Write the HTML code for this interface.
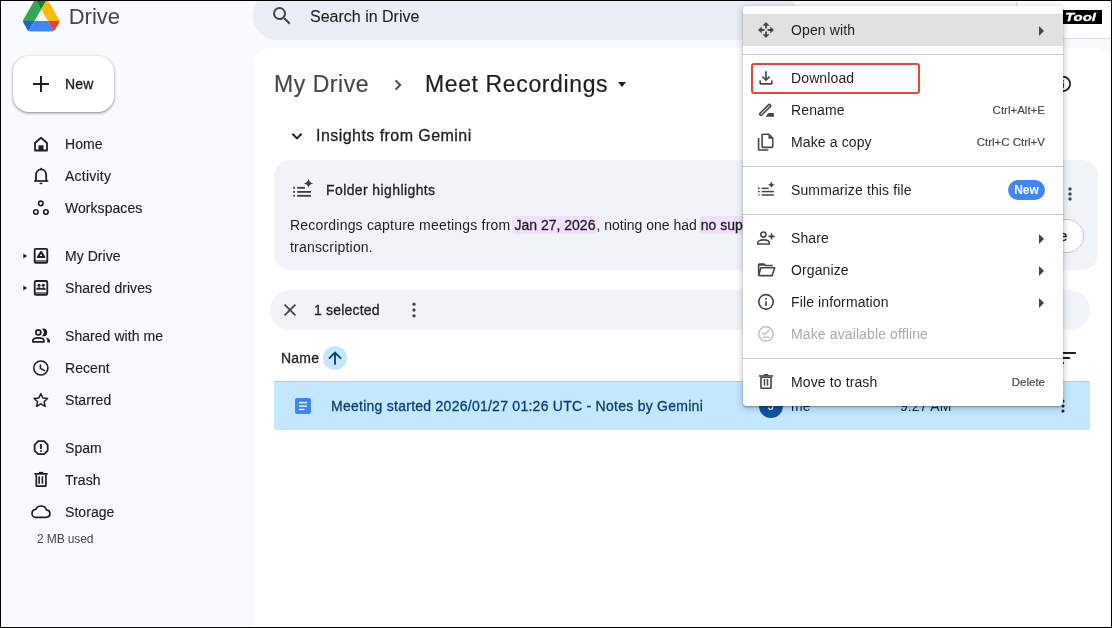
<!DOCTYPE html>
<html><head><meta charset="utf-8">
<style>
*{box-sizing:border-box;margin:0;padding:0}
html,body{width:1112px;height:628px;overflow:hidden;background:#f8fafd;will-change:transform;font-family:"Liberation Sans",sans-serif;color:#1f1f1f}
.a{position:absolute;white-space:nowrap}
#frame{position:absolute;left:0;top:0;width:1112px;height:628px;border:1px solid #000;z-index:100;pointer-events:none}
.nav{position:absolute;white-space:nowrap;left:65px;font-size:14px;color:#1f1f1f;line-height:16px;-webkit-text-stroke:0.15px #1f1f1f;letter-spacing:0.05px}
.ni{position:absolute;left:32px;width:18px;height:18px}
.mi{position:absolute;white-space:nowrap;left:791px;font-size:14px;color:#1f1f1f;line-height:16px;letter-spacing:0.12px}
.mic{position:absolute;left:756px;width:20px;height:20px}
.sc{position:absolute;white-space:nowrap;font-size:11.5px;color:#444746;line-height:14px;text-align:right;right:67px;-webkit-text-stroke:0.15px #444746}
.arr{position:absolute;left:1039px;width:0;height:0;border-top:5px solid transparent;border-bottom:5px solid transparent;border-left:5px solid #444746}
.hl{background:#f1e0fc;border-radius:4px;padding:1px 2px 1px 2px;margin-left:-2px;margin-right:-1px;letter-spacing:0;-webkit-text-stroke:0.3px #1f1f1f}
.div{position:absolute;left:743px;width:320px;height:1px;background:#c7c7c7}
</style></head><body>
<div id="frame"></div>

<!-- logo -->
<svg class="a" style="left:22.7px;top:-0.8px" width="36.4" height="32.5" viewBox="0 0 87.3 78">
<path d="m6.6 66.85 3.85 6.65c.8 1.4 1.95 2.5 3.3 3.3l13.75-23.8h-27.5c0 1.55.4 3.1 1.2 4.5z" fill="#1967d2"/>
<path d="m43.65 25-13.75-23.8c-1.35.8-2.5 1.9-3.3 3.3l-25.4 44a9.06 9.06 0 0 0 -1.2 4.5h27.5z" fill="#34a853"/>
<path d="m73.55 76.8c1.35-.8 2.5-1.9 3.3-3.3l1.6-2.75 7.65-13.25c.8-1.4 1.2-2.95 1.2-4.5h-27.502l5.852 11.5z" fill="#ea4335"/>
<path d="m43.65 25 13.75-23.8c-1.35-.8-2.9-1.2-4.5-1.2h-18.5c-1.6 0-3.15.45-4.5 1.2z" fill="#188038"/>
<path d="m59.8 53h-32.3l-13.75 23.8c1.35.8 2.9 1.2 4.5 1.2h50.8c1.6 0 3.15-.45 4.5-1.2z" fill="#4285f4"/>
<path d="m73.4 26.5-12.7-22c-.8-1.4-1.95-2.5-3.3-3.3l-13.75 23.8 16.15 28h27.45c0-1.55-.4-3.1-1.2-4.5z" fill="#fbbc04"/>
</svg>
<div class="a" style="left:68.7px;top:4px;font-size:22px;color:#444746;line-height:26px">Drive</div>

<!-- search -->
<div class="a" style="left:253px;top:-8px;width:545px;height:48px;border-radius:24px;background:#e9eef6"></div>
<svg class="a" style="left:270px;top:4px" width="24" height="24" viewBox="0 0 24 24"><path fill="#444746" d="M15.5 14h-.79l-.28-.27A6.47 6.47 0 0 0 16 9.5 6.5 6.5 0 1 0 9.5 16c1.61 0 3.09-.59 4.23-1.57l.27.28v.79l5 4.99L20.49 19l-4.99-5zm-6 0C7.01 14 5 11.99 5 9.5S7.01 5 9.5 5 14 7.01 14 9.5 11.99 14 9.5 14z"/></svg>
<div class="a" style="left:310px;top:8px;font-size:16px;color:#1f1f1f;line-height:18px;-webkit-text-stroke:0.1px #1f1f1f">Search in Drive</div>

<!-- top right white area -->
<div class="a" style="left:1016px;top:0;width:96px;height:39px;background:#fff;border-left:1px solid #dadce0;border-bottom:1px solid #dadce0"></div>
<div class="a" style="left:1063px;top:10px;width:39px;height:14px;background:#000"></div><div class="a" style="left:1065px;top:10px;color:#fff;font-weight:bold;font-style:italic;font-size:11.5px;line-height:14px;transform:scaleX(1.3);transform-origin:0 0;-webkit-text-stroke:0.3px #fff">Tool</div>

<!-- new button -->
<div class="a" style="left:13px;top:56px;width:101px;height:56px;border-radius:16px;background:#fff;box-shadow:0 1px 3px 1px rgba(0,0,0,.15),0 1px 2px rgba(0,0,0,.3)"></div>
<svg class="a" style="left:29px;top:72px" width="24" height="24" viewBox="0 0 24 24"><path d="M20 13h-7v7h-2v-7H4v-2h7V4h2v7h7v2z" fill="#1f1f1f"/></svg>
<div class="a" style="left:65px;top:76px;font-size:14px;line-height:16px;color:#1f1f1f;-webkit-text-stroke:0.35px #1f1f1f;letter-spacing:0.2px">New</div>


<!-- sidebar nav -->
<svg class="a" style="left:0;top:0" width="60" height="628" viewBox="0 0 60 628">
<g fill="none" stroke="#1f1f1f" stroke-width="1.8" stroke-linejoin="round">
<!-- home -->
<path d="M35 150.5V143L41 137.8 47 143V150.5Z"/>
<!-- bell -->
<path d="M36 180.9V175.2C36 171.8 38.2 169.3 41.1 169.3S46.2 171.8 46.2 175.2V180.9"/>
<path d="M34.1 181H48.2" stroke-width="1.7"/>
<!-- workspaces -->
<g stroke-width="1.6"><circle cx="40.8" cy="203.4" r="2.25"/><circle cx="35.9" cy="212" r="2.25"/><circle cx="45.9" cy="212" r="2.25"/></g>
<!-- my drive box -->
<rect x="34.7" y="248.8" width="12.6" height="14.1" rx="1.3"/>
<path d="M41.1 252 37.9 257H44.3Z" stroke-width="2.1" stroke-linejoin="round"/>
<!-- shared drives box -->
<rect x="34.7" y="281" width="12.6" height="13.9" rx="1.3"/>
<!-- shared with me -->
<circle cx="38.35" cy="332.4" r="2.45" stroke-width="1.75"/>
<path d="M32.9 341.8V340.6C32.9 338.9 35.5 337.9 38.4 337.9S43.9 338.9 43.9 340.6V341.8Z" stroke-width="1.75"/>
<!-- clock -->
<circle cx="40.85" cy="368" r="7.05" stroke-width="1.6"/>
<path d="M40.4 364.6V368.3L45 370.9" stroke-width="1.5" stroke-linejoin="miter"/>
<!-- star -->
<path d="M40.85 393.6 42.9 398 47.6 398.5 44.1 401.7 45.1 406.3 40.85 403.9 36.6 406.3 37.6 401.7 34.1 398.5 38.8 398Z" stroke-width="1.5"/>
<!-- spam octagon -->
<path d="M38.2 441.2H44.1L47.7 444.8V450.6L44.1 454.2H38.2L34.6 450.6V444.8Z" stroke-width="1.75"/>
<!-- trash -->
<path d="M36.3 474.5V485.4Q36.3 486.2 37.1 486.2H45.1Q45.9 486.2 45.9 485.4V474.5" stroke-width="1.7"/>
<!-- cloud -->
<path d="M35.3 517.4H45.8C48.2 517.4 49.9 515.8 49.9 513.6 49.9 511.6 48.4 510 46.4 509.8 45.6 507.5 43.5 506 41 506 38.6 506 36.6 507.4 35.8 509.4 33.6 509.7 32 511.4 32 513.4 32 515.6 33.6 517.4 35.3 517.4Z" stroke-width="1.7"/>
</g>
<g fill="#1f1f1f">
<rect x="38.5" y="145.3" width="5" height="5.8"/>
<rect x="40.3" y="167.9" width="1.6" height="2"/>
<path d="M39.4 182.8H42.6Q42.4 184.3 41 184.3T39.4 182.8Z"/>
<path d="M23.3 253.4 27.2 255.9 23.3 258.4Z"/>
<rect x="35" y="260.4" width="12" height="1.2"/>
<path d="M23.3 285.4 27.2 287.9 23.3 290.4Z"/>
<rect x="35" y="292.4" width="12" height="1.2"/>
<circle cx="39" cy="285.3" r="1.5"/><circle cx="43.3" cy="285.3" r="1.5"/>
<path d="M36.1 289.8Q36.3 287.2 39 287.2T41.9 289.8Z M41.1 289.8Q41.3 287.2 43.3 287.2T46.3 289.8Z"/>
<path d="M43.2 329.1A3.3 3.3 0 0 1 43.2 335.7 5.2 5.2 0 0 0 43.2 329.1Z" stroke="#1f1f1f" stroke-width="1.3"/>
<path d="M45.3 337.3C47.6 337.8 49.9 338.8 49.9 340.6V342.6H47.3V340.6C47.3 339.4 46.6 338.3 45.3 337.3Z"/>
<rect x="40.1" y="444" width="1.8" height="5"/>
<rect x="40.1" y="450.3" width="1.8" height="1.6"/>
<rect x="34.2" y="473" width="13.5" height="1.7"/>
<rect x="38.9" y="471.9" width="4.5" height="1.3"/>
<rect x="38.3" y="476.3" width="1.6" height="7.5"/>
<rect x="41.6" y="476.3" width="1.6" height="7.5"/>
</g>
</svg>
<div class="nav" style="top:136px">Home</div>
<div class="nav" style="top:168px;letter-spacing:0.22px">Activity</div>
<div class="nav" style="top:200px">Workspaces</div>

<div class="nav" style="top:248px">My Drive</div>
<div class="nav" style="top:280px">Shared drives</div>

<div class="nav" style="top:328px">Shared with me</div>
<div class="nav" style="top:360px">Recent</div>
<div class="nav" style="top:392px">Starred</div>

<div class="nav" style="top:440px">Spam</div>
<div class="nav" style="top:472px">Trash</div>
<div class="nav" style="top:504px">Storage</div>
<div class="a" style="left:37px;top:532px;font-size:12px;color:#444746;line-height:14px;letter-spacing:-0.12px">2 MB used</div>

<!-- main panel -->
<div class="a" style="left:254px;top:48px;width:857px;height:620px;border-radius:16px;background:#fff"></div>


<!-- breadcrumb -->
<div class="a" style="left:274px;top:71px;font-size:23px;color:#444746;line-height:26px;letter-spacing:0.55px;-webkit-text-stroke:0.15px #444746">My Drive</div>
<svg class="a" style="left:386px;top:73px" width="24" height="24" viewBox="0 0 24 24"><path fill="none" stroke="#444746" stroke-width="1.9" d="M9.5 7.3 14.2 12l-4.7 4.7"/></svg>
<div class="a" style="left:425px;top:71px;font-size:23px;color:#1f1f1f;line-height:26px;letter-spacing:0.62px;-webkit-text-stroke:0.2px #1f1f1f">Meet Recordings</div>
<div class="a" style="left:618px;top:82px;width:0;height:0;border-left:4.5px solid transparent;border-right:4.5px solid transparent;border-top:5px solid #1f1f1f"></div>
<svg class="a" style="left:1053px;top:74px" width="20" height="20" viewBox="0 0 24 24"><g fill="none" stroke="#1f1f1f" stroke-width="2.1"><circle cx="12" cy="11.8" r="8.6"/></g><rect x="11" y="10.5" width="2" height="6.5" fill="#1f1f1f"/><rect x="11" y="7" width="2" height="2" fill="#1f1f1f"/></svg>

<!-- insights -->
<svg class="a" style="left:287px;top:126px" width="20" height="20" viewBox="0 0 24 24"><path fill="none" stroke="#1f1f1f" stroke-width="2.3" d="M6.5 9.3 12 14.8l5.5-5.5"/></svg>
<div class="a" style="left:316px;top:127px;font-size:16px;color:#1f1f1f;line-height:18px;-webkit-text-stroke:0.3px #1f1f1f;letter-spacing:0.45px">Insights from Gemini</div>

<div class="a" style="left:274px;top:160px;width:824px;height:110px;border-radius:16px;background:#f0f4f9"></div>
<svg class="a" style="left:286px;top:174px" width="32" height="28" viewBox="0 0 32 28"><g fill="#3c3f41"><rect x="7.1" y="12.9" width="1.8" height="1.8"/><rect x="7.1" y="17" width="1.8" height="1.8"/><rect x="7.1" y="20.9" width="1.8" height="1.8"/><rect x="11.1" y="12.9" width="7.8" height="1.8"/><rect x="11.1" y="17" width="13.9" height="1.8"/><rect x="11.1" y="20.9" width="13.9" height="1.8"/><path d="M22.5 4.6Q23 8.8 27.2 9.4Q23 10 22.5 14.1Q22 10 17.8 9.4Q22 8.8 22.5 4.6Z"/></g></svg>
<div class="a" style="left:326px;top:182px;font-size:14px;color:#1f1f1f;line-height:16px;-webkit-text-stroke:0.3px #1f1f1f;letter-spacing:0.4px">Folder highlights</div>
<div class="a" style="left:290px;top:214px;font-size:14px;color:#1f1f1f;line-height:22px;white-space:normal;width:800px;letter-spacing:0.2px">Recordings capture meetings from <span class="hl">Jan 27, 2026</span><span style="letter-spacing:0">, noting one had </span><span class="hl">no supported</span><br>transcription.</div>
<svg class="a" style="left:1060px;top:183.8px" width="20" height="20" viewBox="0 0 24 24"><g fill="#444746"><circle cx="12" cy="6" r="2"/><circle cx="12" cy="12" r="2"/><circle cx="12" cy="18" r="2"/></g></svg>
<div class="a" style="left:1000px;top:219px;width:84px;height:34px;border-radius:17px;border:1px solid #c4c7c5;background:#fff"></div><div class="a" style="left:1030px;top:228px;font-size:14px;line-height:16px;color:#1f1f1f;-webkit-text-stroke:0.3px #1f1f1f">Share</div>

<!-- selection bar -->
<div class="a" style="left:270px;top:290px;width:820px;height:40px;border-radius:20px;background:#f0f4f9"></div>
<svg class="a" style="left:278px;top:298px" width="24" height="24" viewBox="0 0 24 24"><path fill="none" stroke="#444746" stroke-width="1.75" d="M6.6 6.6l10.8 10.8M17.4 6.6l-10.8 10.8"/></svg>
<div class="a" style="left:314px;top:302px;font-size:14px;color:#1f1f1f;line-height:16px;-webkit-text-stroke:0.3px #1f1f1f;letter-spacing:0.2px">1 selected</div>
<svg class="a" style="left:404px;top:300px" width="20" height="20" viewBox="0 0 24 24"><g fill="#444746"><circle cx="12" cy="5" r="2"/><circle cx="12" cy="12" r="2"/><circle cx="12" cy="19" r="2"/></g></svg>

<!-- header -->
<div class="a" style="left:281px;top:350px;font-size:14px;color:#1f1f1f;line-height:16px;-webkit-text-stroke:0.3px #1f1f1f;letter-spacing:0.2px">Name</div>
<div class="a" style="left:323px;top:346px;width:24px;height:24px;border-radius:12px;background:#c2e7ff"></div>
<svg class="a" style="left:325px;top:348px" width="20" height="20" viewBox="0 0 24 24"><path fill="#07406e" d="M10.9 20V8.1l-5.4 5.4L4 12l8-8 8 8-1.5 1.5-5.4-5.4V20z"/></svg>
<svg class="a" style="left:1050px;top:346px" width="30" height="22" viewBox="0 0 30 22"><g fill="#1f1f1f"><rect x="8" y="6" width="18" height="2" rx="0.5"/><rect x="8" y="11" width="12" height="2" rx="0.5"/><rect x="8" y="16" width="6" height="2" rx="0.5"/></g></svg>

<!-- row -->
<div class="a" style="left:274px;top:381px;width:816px;height:49px;background:#c2e7ff;border-top:1px solid #c7c7c7"></div>
<svg class="a" style="left:295px;top:398px" width="16" height="16" viewBox="0 0 16 16"><rect x="0" y="0" width="16" height="16" rx="2" fill="#4285f4"/><g fill="#fff"><rect x="4" y="4" width="8" height="1.3"/><rect x="4" y="7.4" width="8" height="1.3"/><rect x="4" y="10.8" width="5.5" height="1.3"/></g></svg>
<div class="a" style="left:331px;top:398px;font-size:14px;color:#0b3f70;line-height:16px;-webkit-text-stroke:0.3px #0b3f70;letter-spacing:0.26px">Meeting started 2026/01/27 01:26 UTC - Notes by Gemini</div>
<div class="a" style="left:759px;top:394px;width:24px;height:24px;border-radius:12px;background:#0a56a3;color:#fff;font-size:13px;line-height:24px;text-align:center">J</div>
<div class="a" style="left:791px;top:398px;font-size:14px;color:#0b2a4a;line-height:16px">me</div>
<div class="a" style="left:900px;top:398px;font-size:14px;color:#0b2a4a;line-height:16px">9:27 AM</div>
<svg class="a" style="left:1053px;top:395.8px" width="20" height="20" viewBox="0 0 24 24"><g fill="#1f1f1f"><circle cx="12" cy="6.1" r="1.85"/><circle cx="12" cy="12" r="1.85"/><circle cx="12" cy="17.9" r="1.85"/></g></svg>


<!-- context menu -->
<div class="a" style="left:743px;top:6px;width:320px;height:400px;background:#fff;border-radius:4px;box-shadow:0 2px 6px 2px rgba(0,0,0,.15),0 1px 2px rgba(0,0,0,.3);z-index:10"></div>
<div id="menu" style="position:absolute;left:0;top:0;width:1112px;height:628px;z-index:11">
<div class="a" style="left:743px;top:14px;width:320px;height:32px;background:#e1e1e1"></div>
<svg class="mic" style="top:20px" viewBox="0 0 24 24"><path fill="#444746" d="M12 2.4 16.3 6.9H13.1V10.2H10.9V6.9H7.7Z M12 21.6 7.7 17.1H10.9V13.8H13.1V17.1H16.3Z M2.4 12 6.9 7.7V10.9H10.2V13.1H6.9V16.3Z M21.6 12 17.1 16.3V13.1H13.8V10.9H17.1V7.7Z"/></svg>
<div class="mi" style="top:22px">Open with</div>
<div class="arr" style="top:26px"></div>
<div class="div" style="top:54px"></div>

<svg class="mic" style="top:68px" viewBox="0 0 24 24"><path fill="#444746" d="M12 16 7 11l1.4-1.45 2.6 2.6V4h2v8.15l2.6-2.6L17 11zm-6 4c-.55 0-1.02-.2-1.41-.59A1.93 1.93 0 0 1 4 18v-3h2v3h12v-3h2v3c0 .55-.2 1.02-.59 1.41-.39.4-.86.59-1.41.59z"/></svg>
<div class="mi" style="top:70px">Download</div>
<div class="a" style="left:751px;top:63px;width:169px;height:31px;border:2.8px solid #e8473d;border-radius:3px"></div>

<svg class="mic" style="top:100px" viewBox="0 0 24 24"><g transform="translate(11 11.9) rotate(45)"><rect x="-1.5" y="-8.6" width="3" height="17.2" rx="1.5" fill="none" stroke="#444746" stroke-width="1.9"/></g><path fill="#444746" d="M11.4 20 15 15.6H21.4V20Z"/></svg>
<div class="mi" style="top:102px">Rename</div>
<div class="sc" style="top:103px">Ctrl+Alt+E</div>

<svg class="mic" style="top:132px" viewBox="0 0 24 24"><path fill="none" stroke="#444746" stroke-width="1.9" stroke-linejoin="round" d="M8.3 2.7H15.4L20.1 7.4V17.4Q20.1 18.4 19.1 18.4H8.3Q7.3 18.4 7.3 17.4V3.7Q7.3 2.7 8.3 2.7Z M3.1 7.3V20.6Q3.1 21.6 4.1 21.6H14.8"/><path fill="#444746" d="M15 3V8H20Z"/></svg>
<div class="mi" style="top:134px">Make a copy</div>
<div class="sc" style="top:135px">Ctrl+C Ctrl+V</div>
<div class="div" style="top:166px"></div>

<svg class="mic" style="top:180px" viewBox="0 0 24 24"><g fill="#444746"><rect x="2.4" y="9.1" width="2" height="1.8"/><rect x="2.4" y="13" width="2" height="1.8"/><rect x="2.9" y="16.9" width="1.2" height="2.2"/><rect x="6.7" y="9.1" width="8.5" height="1.8"/><rect x="6.7" y="13" width="14.7" height="1.8"/><rect x="6.7" y="17.1" width="14.7" height="1.8"/><path d="M18.4 1.2Q18.9 5.3 22.8 5.8Q18.9 6.3 18.4 10.4Q17.9 6.3 14 5.8Q17.9 5.3 18.4 1.2Z"/></g></svg>
<div class="mi" style="top:182px">Summarize this file</div>
<div class="a" style="left:1008px;top:180px;width:37px;height:20px;border-radius:10px;background:#4285f4;color:#fff;font-weight:bold;font-size:12px;line-height:20px;text-align:center">New</div>
<div class="div" style="top:214px"></div>

<svg class="mic" style="top:228px" viewBox="0 0 24 24"><g fill="none" stroke="#444746" stroke-width="1.9"><circle cx="8.9" cy="7.8" r="3.1"/><path d="M2.1 19.1V17.7C2.1 15.6 5.3 14.2 9 14.2S15.9 15.6 15.9 17.7V19.1Z"/><path d="M18.7 6.3V13.7M15 10H22.4"/></g></svg>
<div class="mi" style="top:230px">Share</div>
<div class="arr" style="top:234px"></div>

<svg class="mic" style="top:260px" viewBox="0 0 24 24"><path fill="none" stroke="#444746" stroke-width="1.9" stroke-linejoin="round" d="M3.2 18.8V5.6Q3.2 4.7 4.1 4.7H9.4L11.3 6.6H20.3 M3.2 18.8H19.3L22.4 9.4H5.9L3.3 18.3"/><path fill="#444746" d="M3.2 4.7H9.4L11.6 7H3.2Z"/></svg>
<div class="mi" style="top:262px">Organize</div>
<div class="arr" style="top:266px"></div>

<svg class="mic" style="top:292px" viewBox="0 0 24 24"><circle cx="12" cy="11.8" r="8.7" fill="none" stroke="#444746" stroke-width="1.9"/><rect x="11" y="11.2" width="2" height="5.5" fill="#444746"/><rect x="11" y="7.1" width="2" height="2" fill="#444746"/></svg>
<div class="mi" style="top:294px">File information</div>
<div class="arr" style="top:298px"></div>

<svg class="mic" style="top:324px" viewBox="0 0 24 24"><g fill="none" stroke="#c4c7c5" stroke-width="1.9"><circle cx="12" cy="11.8" r="8.7"/><path d="M7.8 10.4 10.2 12.8 16.1 6.9 M7.6 15.9H16.6"/></g></svg>
<div class="mi" style="top:326px;color:#aaa">Make available offline</div>
<div class="div" style="top:358px"></div>

<svg class="mic" style="top:372px" viewBox="0 0 24 24"><g fill="#444746"><path d="M5 5.6H19V18.6Q19 20.4 17.2 20.4H6.8Q5 20.4 5 18.6Z M6.9 7.3V18.5H17.1V7.3Z"/><rect x="3.6" y="3.8" width="16.8" height="1.9"/><rect x="9.3" y="2.4" width="5.4" height="1.6"/><rect x="9.3" y="8.4" width="1.8" height="8"/><rect x="12.9" y="8.4" width="1.8" height="8"/></g></svg>
<div class="mi" style="top:374px">Move to trash</div>
<div class="sc" style="top:375px">Delete</div>
</div>

</body></html>
